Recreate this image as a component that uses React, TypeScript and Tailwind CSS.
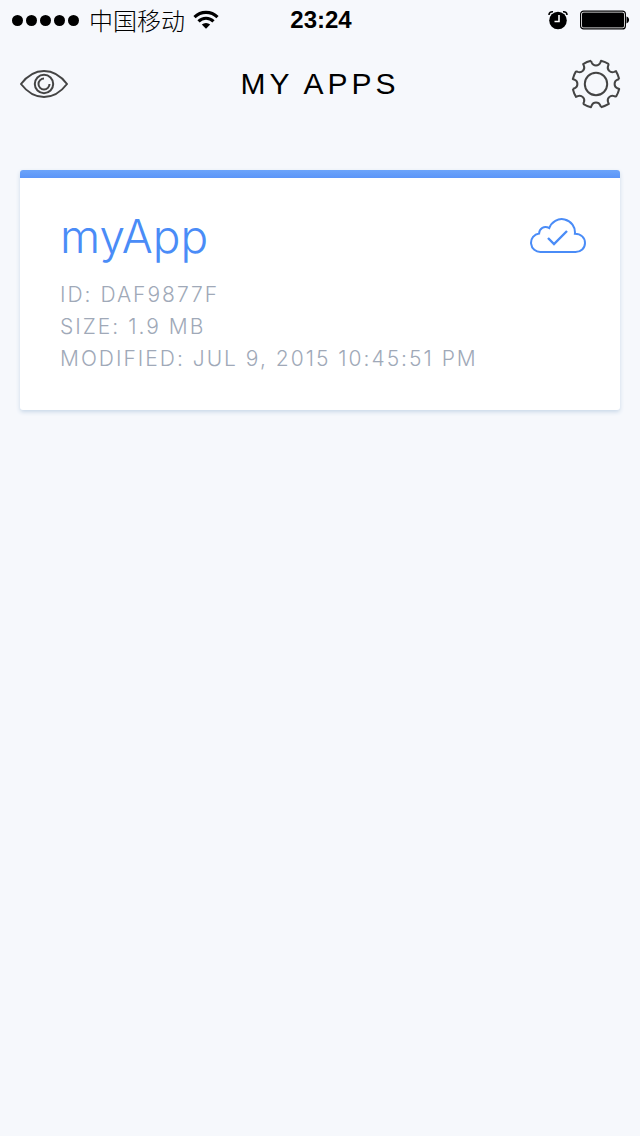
const toothAngles = [0, 45, 90, 135, 180, 225, 270, 315];
const signalDots = [0, 1, 2, 3, 4];

function WifiIcon() {
  return (
    <svg width="26" height="20" viewBox="0 0 26 20" aria-hidden="true">
      <g fill="none" stroke="#000" strokeWidth="3.1">
        <path d="M1.5 7.1a16.3 16.3 0 0 1 23 0" />
        <path d="M5.5 11.3a10.6 10.6 0 0 1 15 0" />
      </g>
      <path d="M8.8 14.6a6 6 0 0 1 8.4 0L13 18.8z" />
    </svg>
  );
}

function AlarmIcon() {
  return (
    <svg width="20" height="20" viewBox="0 0 20 20" aria-hidden="true">
      <circle cx="10" cy="10.5" r="8.8" />
      <path d="M1 5C1 2.6 2.8 1.5 5 1.8M19 5C19 2.6 17.2 1.5 15 1.8" fill="none" stroke="#000" strokeWidth="1.6" />
      <path d="M11 5v6.5H6.5" fill="none" stroke="#fff" strokeWidth="1.6" />
    </svg>
  );
}

function BatteryIcon() {
  return (
    <svg width="50" height="20" viewBox="0 0 50 20" aria-hidden="true">
      <rect x="0.6" y="1.1" width="44.8" height="17.8" rx="3" fill="#fff" stroke="#000" strokeWidth="1.2" />
      <rect x="2" y="2.5" width="42" height="15" rx="1.5" />
      <path d="M46.5 6.6c3.4.8 3.4 6 0 6.8z" />
    </svg>
  );
}

function EyeIcon() {
  return (
    <svg width="48" height="30" viewBox="0 0 48 30" fill="none" stroke="#444" strokeWidth="2" aria-hidden="true">
      <path d="M1 15C7.5 6.5 15 2 24 2s16.5 4.5 23 13c-6.5 8.5-14 13-23 13S7.5 23.5 1 15z" />
      <circle cx="24" cy="15" r="9.2" />
      <path d="M24 9.5a5.5 5.5 0 1 0 5.5 5.5" />
    </svg>
  );
}

function GearIcon() {
  return (
    <svg width="48" height="48" viewBox="-24 -24 48 48" fill="none" stroke="#444" strokeWidth="2" strokeLinejoin="round" className="overflow-visible" aria-hidden="true">
      {toothAngles.map((angle) => (
        <path
          key={angle}
          transform={`rotate(${angle})`}
          d="M-5 -23.2L-4.3 -21.4A4.7 4.7 0 0 0 4.3 -21.4L5 -23.2Q9.2 -22.2 12.9 -19.9"
        />
      ))}
      <circle r="11.2" />
    </svg>
  );
}

function CloudCheckIcon() {
  return (
    <svg width="56" height="38" viewBox="0 0 56 38" fill="none" stroke="#4a8cf7" strokeWidth="2" aria-hidden="true">
      <path d="M10.9 35A9.3 9.3 0 0 1 9.1 16.5C9.2 11.2 14.2 8.4 19.3 11A13.2 13.2 0 0 1 44.9 16.7C51 16.7 55 20.8 55 26S50.8 35 45.5 35z" />
      <path d="M18 21l6 6L37 14" strokeWidth="2.4" />
    </svg>
  );
}

export default function App() {
  return (
    <div className="min-h-screen bg-[#f6f8fc] font-['Liberation_Sans','Noto_Sans_CJK_SC',sans-serif] text-black">
      <div className="grid h-10 grid-cols-[1fr_auto_1fr] items-center pr-2.5 pl-3">
        <div className="flex items-center">
          <div className="flex gap-[3px]">
            {signalDots.map((dot) => (
              <span key={dot} className="size-[11px] rounded-full bg-black" />
            ))}
          </div>
          <span className="ml-2.5 font-['Noto_Sans_CJK_SC',sans-serif] text-[24px] leading-10 font-light">中国移动</span>
          <span className="ml-2"><WifiIcon /></span>
        </div>
        <time className="text-[24px] leading-10 font-bold">23:24</time>
        <div className="flex items-center justify-end gap-3">
          <AlarmIcon />
          <BatteryIcon />
        </div>
      </div>

      <header className="grid h-[88px] grid-cols-[1fr_auto_1fr] items-center px-5">
        <button type="button" aria-label="Preview" className="justify-self-start">
          <EyeIcon />
        </button>
        <h1 className="text-[30px] leading-10 tracking-[4px]">MY APPS</h1>
        <button type="button" aria-label="Settings" className="justify-self-end">
          <GearIcon />
        </button>
      </header>

      <main className="px-5 pt-[42px]">
        <article className="overflow-hidden rounded-[3px] bg-white shadow-[0_2px_4px_#c9d8e8]">
          <div className="h-2 bg-linear-to-b from-[#6ca4fa] to-[#5b95f8]" />
          <div className="px-10 pt-7 pb-[35px]">
            <div className="-mr-1.5 flex items-center justify-between">
              <h2 className="font-['Inter',sans-serif] text-[46px] leading-[60px] font-light text-[#4a8cf7]">myApp</h2>
              <CloudCheckIcon />
            </div>
            <div className="mt-[13px] font-['Inter',sans-serif] text-[21px] leading-8 font-light tracking-[2px] text-[#a0a9b8]">
              <p>ID: DAF9877F</p>
              <p>SIZE: 1.9 MB</p>
              <p>MODIFIED: JUL 9, 2015 10:45:51 PM</p>
            </div>
          </div>
        </article>
      </main>
    </div>
  );
}
